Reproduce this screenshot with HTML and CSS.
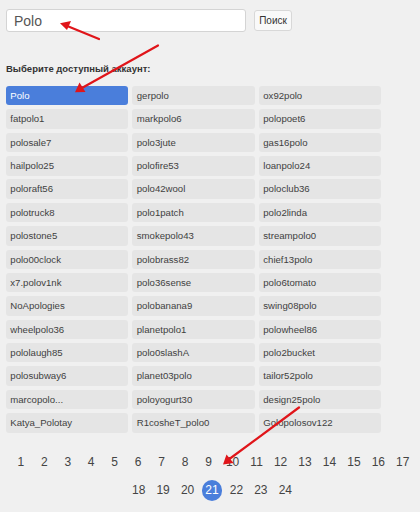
FILE: index.html
```html
<!DOCTYPE html>
<html>
<head>
<meta charset="utf-8">
<link rel="stylesheet" href="styles.css">
</head>
<body>
<div class="page">
  <form class="search">
    <input class="search-input" type="text" value="Polo">
    <button class="search-btn" type="button">Поиск</button>
  </form>
  <div class="label">Выберите доступный аккаунт:</div>
  <div class="grid">
    <div class="cell selected">Polo</div><div class="cell">gerpolo</div><div class="cell">ox92polo</div>
    <div class="cell">fatpolo1</div><div class="cell">markpolo6</div><div class="cell">polopoet6</div>
    <div class="cell">polosale7</div><div class="cell">polo3jute</div><div class="cell">gas16polo</div>
    <div class="cell">hailpolo25</div><div class="cell">polofire53</div><div class="cell">loanpolo24</div>
    <div class="cell">poloraft56</div><div class="cell">polo42wool</div><div class="cell">poloclub36</div>
    <div class="cell">polotruck8</div><div class="cell">polo1patch</div><div class="cell">polo2linda</div>
    <div class="cell">polostone5</div><div class="cell">smokepolo43</div><div class="cell">streampolo0</div>
    <div class="cell">polo00clock</div><div class="cell">polobrass82</div><div class="cell">chief13polo</div>
    <div class="cell">x7.polov1nk</div><div class="cell">polo36sense</div><div class="cell">polo6tomato</div>
    <div class="cell">NoApologies</div><div class="cell">polobanana9</div><div class="cell">swing08polo</div>
    <div class="cell">wheelpolo36</div><div class="cell">planetpolo1</div><div class="cell">polowheel86</div>
    <div class="cell">pololaugh85</div><div class="cell">polo0slashA</div><div class="cell">polo2bucket</div>
    <div class="cell">polosubway6</div><div class="cell">planet03polo</div><div class="cell">tailor52polo</div>
    <div class="cell">marcopolo...</div><div class="cell">poloyogurt30</div><div class="cell">design25polo</div>
    <div class="cell">Katya_Polotay</div><div class="cell">R1cosheT_polo0</div><div class="cell">Golopolosov122</div>
  </div>
  <div class="pager">
    <span class="pg">1</span><span class="pg">2</span><span class="pg">3</span><span class="pg">4</span><span class="pg">5</span><span class="pg">6</span><span class="pg">7</span><span class="pg">8</span><span class="pg">9</span><span class="pg">10</span><span class="pg">11</span><span class="pg">12</span><span class="pg">13</span><span class="pg">14</span><span class="pg">15</span><span class="pg">16</span><span class="pg">17</span><span class="pg">18</span><span class="pg">19</span><span class="pg">20</span><span class="pg active">21</span><span class="pg">22</span><span class="pg">23</span><span class="pg">24</span>
  </div>
</div>
<svg class="arrows" width="420" height="512" viewBox="0 0 420 512">
  <g stroke="#e0151a" stroke-width="2.2" stroke-linecap="round" fill="none">
    <line x1="99" y1="39" x2="66" y2="25.5"/>
    <line x1="158" y1="45.5" x2="81" y2="88.5"/>
    <line x1="299" y1="407.5" x2="228" y2="460"/>
  </g>
  <g fill="#e0151a">
    <polygon points="60,23.3 71,21 67,30"/>
    <polygon points="75,92.3 79.5,82.5 85.5,92"/>
    <polygon points="223,464.5 226.5,454.5 233.5,463"/>
  </g>
</svg>
</body>
</html>
```

FILE: styles.css
```css
html, body {
  margin: 0;
  padding: 0;
  background: #f0f0f0;
}
body {
  font-family: "Liberation Sans", Arial, sans-serif;
  color: #444;
  width: 420px;
  height: 512px;
  overflow: hidden;
  position: relative;
}
.page {
  padding: 9px 0 0 6px;
}
.search {
  display: flex;
  align-items: center;
  gap: 8px;
  margin: 0;
  height: 23px;
}
.search-input {
  box-sizing: border-box;
  width: 240px;
  height: 23px;
  margin: 0;
  border: 1px solid #d4d4d4;
  border-radius: 3px;
  background: #fff;
  padding: 0 0 0 7px;
  font-family: "Liberation Sans", Arial, sans-serif;
  font-size: 14px;
  color: #555;
  outline: none;
}
.search-btn {
  box-sizing: border-box;
  height: 21px;
  width: 38px;
  margin: 0;
  padding: 0;
  border: 1px solid #d8d8d8;
  border-radius: 3px;
  background: #f9f9f9;
  font-family: "Liberation Sans", Arial, sans-serif;
  font-size: 10px;
  color: #333;
}
.label {
  margin-top: 30.7px;
  font-size: 9.5px;
  line-height: 12px;
  font-weight: bold;
  color: #333;
}
.grid {
  margin-top: 11.3px;
  display: grid;
  grid-template-columns: repeat(3, 122.3px);
  grid-auto-rows: 19.5px;
  column-gap: 4.2px;
  row-gap: 3.86px;
}
.cell {
  background: #e5e5e5;
  border-radius: 3px;
  padding-left: 4.3px;
  font-size: 9.6px;
  line-height: 19.5px;
  color: #3f3f3f;
  white-space: nowrap;
  overflow: hidden;
}
.cell.selected {
  background: #4a7edb;
  color: #fff;
}
.pager {
  margin-top: 19.5px;
  width: 412px;
  display: flex;
  flex-wrap: wrap;
  justify-content: center;
  column-gap: 4.3px;
  row-gap: 7px;
}
.pg {
  box-sizing: border-box;
  min-width: 19.2px;
  height: 21px;
  padding: 0 3.4px;
  font-size: 12px;
  line-height: 21px;
  text-align: center;
  color: #444;
  border-radius: 11px;
}
.pg.active {
  background: #4a7edb;
  color: #fff;
}
.arrows {
  position: absolute;
  left: 0;
  top: 0;
  pointer-events: none;
}
```
